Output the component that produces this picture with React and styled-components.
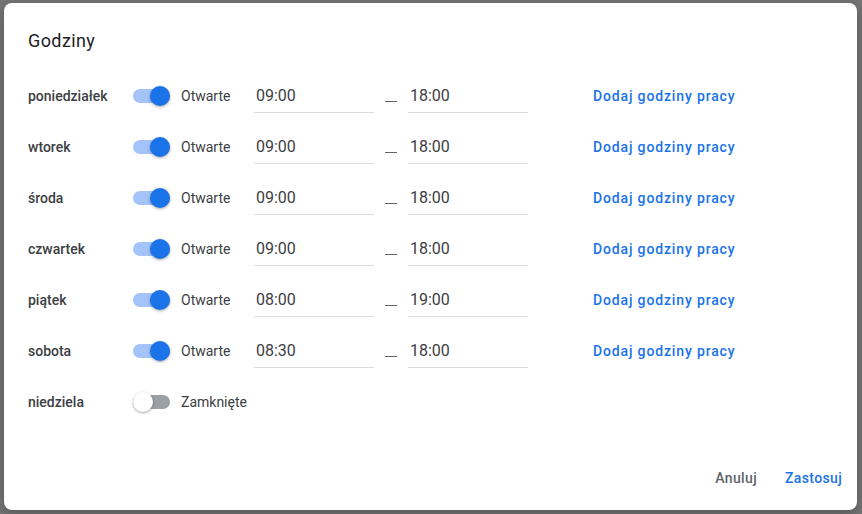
import React from "react";
import styled, { createGlobalStyle } from "styled-components";

const GlobalStyle = createGlobalStyle`
	html, body {
		margin: 0;
		padding: 0;
		background: #747474;
		font-family: Roboto, "Liberation Sans", Arial, sans-serif;
	}
`;

const days = [
	{ id: 1, name: "poniedziałek", open: true, from: "09:00", to: "18:00" },
	{ id: 2, name: "wtorek", open: true, from: "09:00", to: "18:00" },
	{ id: 3, name: "środa", open: true, from: "09:00", to: "18:00" },
	{ id: 4, name: "czwartek", open: true, from: "09:00", to: "18:00" },
	{ id: 5, name: "piątek", open: true, from: "08:00", to: "19:00" },
	{ id: 6, name: "sobota", open: true, from: "08:30", to: "18:00" },
	{ id: 7, name: "niedziela", open: false },
];

const App = () => {
	return (
		<>
			<GlobalStyle />
			<Overlay>
				<Dialog>
					<Title>Godziny</Title>
					<Rows>
						{days.map(day => <DayRow key={day.id} {...day} />)}
					</Rows>
					<Footer>
						<Button>Anuluj</Button>
						<Button $primary>Zastosuj</Button>
					</Footer>
				</Dialog>
			</Overlay>
		</>
	);
};

//one line of the week
const DayRow = ({ name, open, from, to }) => {
	return (
		<Row>
			<DayName>{name}</DayName>
			<Switch $on={open}>
				<span />
			</Switch>
			<Status>{open ? "Otwarte" : "Zamknięte"}</Status>
			{open && (
				<>
					<TimeField>{from}</TimeField>
					<Dash />
					<TimeField>{to}</TimeField>
					<span />
					<AddLink>Dodaj godziny pracy</AddLink>
				</>
			)}
		</Row>
	);
};

export default App;

const Overlay = styled.div`
	padding: 3px 5px 4px 4px;
	height: 514px;
	box-sizing: border-box;
`;

const Dialog = styled.div`
	display: flex;
	flex-direction: column;
	width: 853px;
	height: 507px;
	box-sizing: border-box;
	padding: 24px 0 0 24px;
	background: #fff;
	border-radius: 8px;
	box-shadow: 0 4px 12px rgba(0, 0, 0, 0.25);
`;

const Title = styled.h2`
	margin: 0;
	font-size: 18px;
	line-height: 28px;
	font-weight: 400;
	letter-spacing: 0.4px;
	color: #202124;
`;

const Rows = styled.div`
	margin-top: 15px;
	display: flex;
	flex-direction: column;
`;

const Row = styled.div`
	display: grid;
	grid-template-columns: 105px 48px 73px 120px 34px 120px 65px auto;
	align-items: center;
	height: 51px;
`;

const DayName = styled.div`
	font-size: 14px;
	font-weight: 500;
	color: #3c4043;
`;

const Switch = styled.div`
	position: relative;
	width: 37px;
	height: 14px;
	border-radius: 7px;
	background: ${p => (p.$on ? "#a3c3f9" : "#9aa0a6")};

	span {
		position: absolute;
		top: -3px;
		left: ${p => (p.$on ? "17px" : "0")};
		width: 20px;
		height: 20px;
		border-radius: 50%;
		background: ${p => (p.$on ? "#1a73e8" : "#fff")};
		box-shadow: 0 1px 3px rgba(0, 0, 0, 0.35);
	}
`;

const Status = styled.div`
	font-size: 14px;
	color: #3c4043;
	white-space: nowrap;
`;

const TimeField = styled.div`
	height: 34px;
	box-sizing: border-box;
	padding: 0 2px;
	display: flex;
	align-items: center;
	font-size: 16px;
	color: #3c4043;
	border-bottom: 1px solid #dadce0;
	margin-top: 1px;
`;

const Dash = styled.div`
	justify-self: center;
	width: 12px;
	height: 1px;
	background: #5f6368;
	margin-top: 12px;
`;

const AddLink = styled.a`
	font-size: 14px;
	font-weight: 500;
	letter-spacing: 0.85px;
	color: #1a73e8;
	cursor: pointer;
	white-space: nowrap;
`;

const Footer = styled.div`
	margin-top: auto;
	display: flex;
	justify-content: flex-end;
	gap: 12px;
	padding: 0 7px 14px 0;
`;

const Button = styled.button`
	height: 36px;
	padding: 0 8px;
	border: none;
	background: none;
	font-family: inherit;
	font-size: 14px;
	font-weight: 500;
	letter-spacing: 0.35px;
	color: ${p => (p.$primary ? "#1a73e8" : "#5f6368")};
	cursor: pointer;
`;
